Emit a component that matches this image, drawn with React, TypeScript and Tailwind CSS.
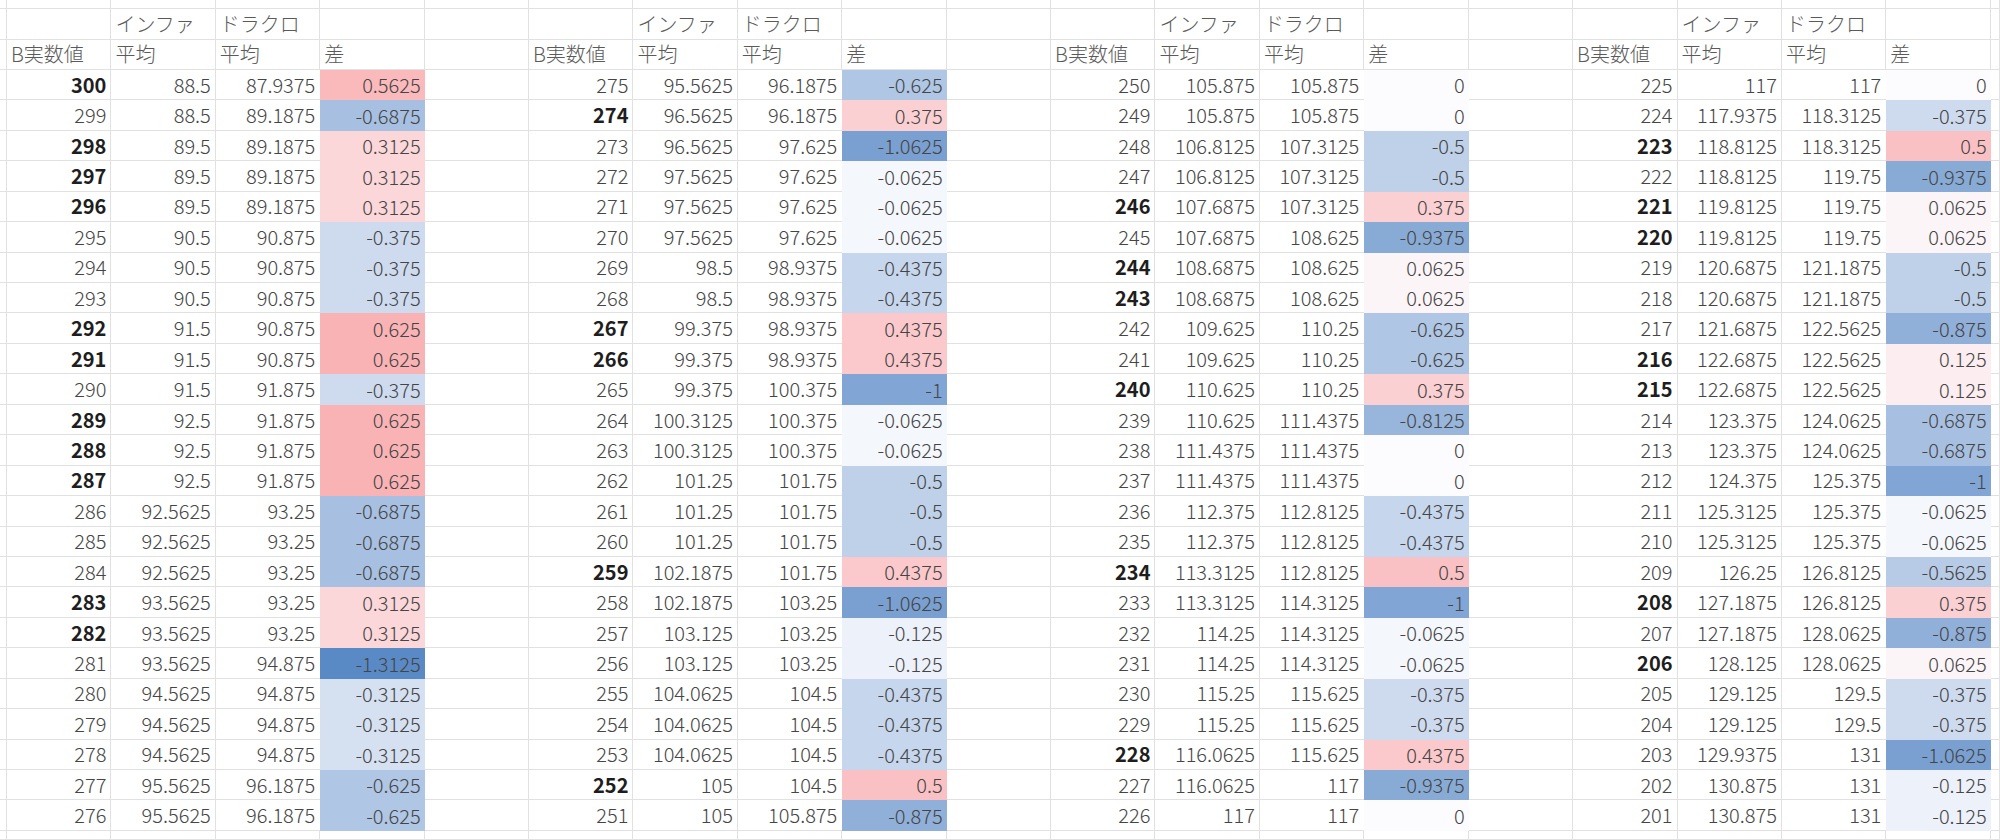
import React from "react";

type Row = [number, number, number, number];

const T1: Row[] = [
  [300, 88.5, 87.9375, 0.5625],
  [299, 88.5, 89.1875, -0.6875],
  [298, 89.5, 89.1875, 0.3125],
  [297, 89.5, 89.1875, 0.3125],
  [296, 89.5, 89.1875, 0.3125],
  [295, 90.5, 90.875, -0.375],
  [294, 90.5, 90.875, -0.375],
  [293, 90.5, 90.875, -0.375],
  [292, 91.5, 90.875, 0.625],
  [291, 91.5, 90.875, 0.625],
  [290, 91.5, 91.875, -0.375],
  [289, 92.5, 91.875, 0.625],
  [288, 92.5, 91.875, 0.625],
  [287, 92.5, 91.875, 0.625],
  [286, 92.5625, 93.25, -0.6875],
  [285, 92.5625, 93.25, -0.6875],
  [284, 92.5625, 93.25, -0.6875],
  [283, 93.5625, 93.25, 0.3125],
  [282, 93.5625, 93.25, 0.3125],
  [281, 93.5625, 94.875, -1.3125],
  [280, 94.5625, 94.875, -0.3125],
  [279, 94.5625, 94.875, -0.3125],
  [278, 94.5625, 94.875, -0.3125],
  [277, 95.5625, 96.1875, -0.625],
  [276, 95.5625, 96.1875, -0.625],
];

const T2: Row[] = [
  [275, 95.5625, 96.1875, -0.625],
  [274, 96.5625, 96.1875, 0.375],
  [273, 96.5625, 97.625, -1.0625],
  [272, 97.5625, 97.625, -0.0625],
  [271, 97.5625, 97.625, -0.0625],
  [270, 97.5625, 97.625, -0.0625],
  [269, 98.5, 98.9375, -0.4375],
  [268, 98.5, 98.9375, -0.4375],
  [267, 99.375, 98.9375, 0.4375],
  [266, 99.375, 98.9375, 0.4375],
  [265, 99.375, 100.375, -1],
  [264, 100.3125, 100.375, -0.0625],
  [263, 100.3125, 100.375, -0.0625],
  [262, 101.25, 101.75, -0.5],
  [261, 101.25, 101.75, -0.5],
  [260, 101.25, 101.75, -0.5],
  [259, 102.1875, 101.75, 0.4375],
  [258, 102.1875, 103.25, -1.0625],
  [257, 103.125, 103.25, -0.125],
  [256, 103.125, 103.25, -0.125],
  [255, 104.0625, 104.5, -0.4375],
  [254, 104.0625, 104.5, -0.4375],
  [253, 104.0625, 104.5, -0.4375],
  [252, 105, 104.5, 0.5],
  [251, 105, 105.875, -0.875],
];

const T3: Row[] = [
  [250, 105.875, 105.875, 0],
  [249, 105.875, 105.875, 0],
  [248, 106.8125, 107.3125, -0.5],
  [247, 106.8125, 107.3125, -0.5],
  [246, 107.6875, 107.3125, 0.375],
  [245, 107.6875, 108.625, -0.9375],
  [244, 108.6875, 108.625, 0.0625],
  [243, 108.6875, 108.625, 0.0625],
  [242, 109.625, 110.25, -0.625],
  [241, 109.625, 110.25, -0.625],
  [240, 110.625, 110.25, 0.375],
  [239, 110.625, 111.4375, -0.8125],
  [238, 111.4375, 111.4375, 0],
  [237, 111.4375, 111.4375, 0],
  [236, 112.375, 112.8125, -0.4375],
  [235, 112.375, 112.8125, -0.4375],
  [234, 113.3125, 112.8125, 0.5],
  [233, 113.3125, 114.3125, -1],
  [232, 114.25, 114.3125, -0.0625],
  [231, 114.25, 114.3125, -0.0625],
  [230, 115.25, 115.625, -0.375],
  [229, 115.25, 115.625, -0.375],
  [228, 116.0625, 115.625, 0.4375],
  [227, 116.0625, 117, -0.9375],
  [226, 117, 117, 0],
];

const T4: Row[] = [
  [225, 117, 117, 0],
  [224, 117.9375, 118.3125, -0.375],
  [223, 118.8125, 118.3125, 0.5],
  [222, 118.8125, 119.75, -0.9375],
  [221, 119.8125, 119.75, 0.0625],
  [220, 119.8125, 119.75, 0.0625],
  [219, 120.6875, 121.1875, -0.5],
  [218, 120.6875, 121.1875, -0.5],
  [217, 121.6875, 122.5625, -0.875],
  [216, 122.6875, 122.5625, 0.125],
  [215, 122.6875, 122.5625, 0.125],
  [214, 123.375, 124.0625, -0.6875],
  [213, 123.375, 124.0625, -0.6875],
  [212, 124.375, 125.375, -1],
  [211, 125.3125, 125.375, -0.0625],
  [210, 125.3125, 125.375, -0.0625],
  [209, 126.25, 126.8125, -0.5625],
  [208, 127.1875, 126.8125, 0.375],
  [207, 127.1875, 128.0625, -0.875],
  [206, 128.125, 128.0625, 0.0625],
  [205, 129.125, 129.5, -0.375],
  [204, 129.125, 129.5, -0.375],
  [203, 129.9375, 131, -1.0625],
  [202, 130.875, 131, -0.125],
  [201, 130.875, 131, -0.125],
];

const TABLES = [T1, T2, T3, T4];

function diffColor(v: number): string {
  const mid = [252, 252, 255];
  let end: number[];
  let t: number;
  if (v < 0) {
    end = [90, 138, 198];
    t = Math.min(1, -v / 1.3125);
  } else {
    end = [248, 105, 107];
    t = Math.min(1, v / 1.25);
  }
  const c = mid.map((m, i) => Math.round(m + (end[i] - m) * t));
  return `rgb(${c[0]}, ${c[1]}, ${c[2]})`;
}

const GRID_CELL =
  "border-r border-b border-[#e1e1e1] overflow-hidden whitespace-nowrap flex items-center";

function Cell({ r, c }: { r: number; c: number }) {
  if (c === 0 || c === 20 || r === 0 || r === 28) {
    return <div className={GRID_CELL} />;
  }
  const m = c - 1;
  const t = Math.floor(m / 5);
  const p = m % 5;
  if (p === 4) {
    return <div className={GRID_CELL} />;
  }
  if (r === 1) {
    const label = p === 1 ? "インファ" : p === 2 ? "ドラクロ" : "";
    return (
      <div className={`${GRID_CELL} justify-start pl-1 text-[#5a5a5a] font-light`}>
        {label}
      </div>
    );
  }
  if (r === 2) {
    const label = ["B実数値", "平均", "平均", "差"][p];
    return (
      <div className={`${GRID_CELL} justify-start pl-1 text-[#5a5a5a] font-light`}>
        {label}
      </div>
    );
  }
  const row = TABLES[t][r - 3];
  const diff = row[3];
  if (p === 3) {
    return (
      <div
        className="overflow-hidden whitespace-nowrap flex items-center justify-end pr-1 text-[#454545] font-light"
        style={{ backgroundColor: diffColor(diff) }}
      >
        {String(diff)}
      </div>
    );
  }
  if (p === 0) {
    const bold = diff > 0;
    return (
      <div
        className={
          bold
            ? `${GRID_CELL} justify-end pr-1 font-semibold text-[#1e1e1e]`
            : `${GRID_CELL} justify-end pr-1 font-light text-[#454545]`
        }
      >
        {String(row[0])}
      </div>
    );
  }
  if (p === 2) {
    return (
      <div className="border-b border-[#e1e1e1] overflow-hidden whitespace-nowrap flex items-center justify-end pr-[5px] text-[#454545] font-light">
        {String(row[2])}
      </div>
    );
  }
  return (
    <div className={`${GRID_CELL} justify-end pr-1 text-[#454545] font-light`}>
      {String(row[p])}
    </div>
  );
}

export default function App() {
  const cells: React.ReactNode[] = [];
  for (let r = 0; r < 29; r++) {
    for (let c = 0; c < 21; c++) {
      cells.push(<Cell key={`${r}-${c}`} r={r} c={c} />);
    }
  }
  return (
    <div className="w-[2000px] h-[840px] overflow-hidden bg-white">
      <div className="grid grid-cols-[7px_repeat(19,104.42px)_1fr] grid-rows-[9.12px_repeat(27,30.44px)_1fr] h-[840px] text-[20px] leading-none font-['Noto_Sans_CJK_JP','Noto_Sans',sans-serif]">
        {cells}
      </div>
    </div>
  );
}
